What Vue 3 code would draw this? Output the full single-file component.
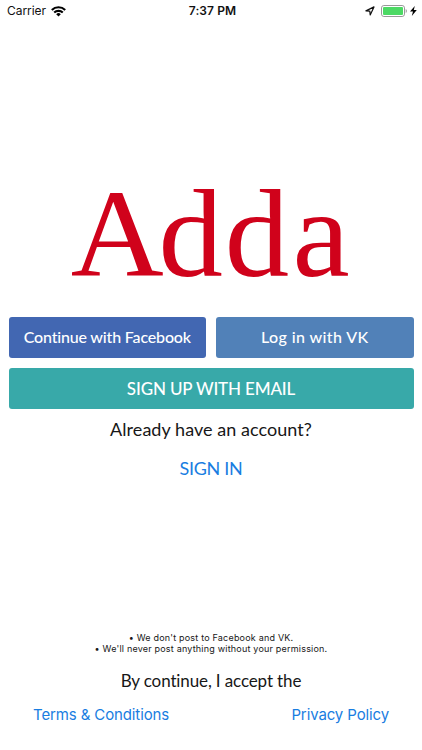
<script setup>
const notes = ["We don't post to Facebook and VK.", "We'll never post anything without your permission."]
</script>

<template>
  <main class="screen">
    <header class="status">
      <div class="side">
        <span class="carrier">Carrier</span>
        <svg class="wifi" width="15" height="11" viewBox="0 0 15 11" aria-hidden="true">
          <g fill="none" stroke="#000" stroke-width="2.1">
            <path d="M.8 4A9.6 9.6 0 0 1 14.2 4" />
            <path d="M3.2 6.6A6.1 6.1 0 0 1 11.8 6.6" />
          </g>
          <path d="M5.2 8.2A3.3 3.3 0 0 1 9.8 8.2L7.5 10.5Z" />
        </svg>
      </div>
      <span class="time">7:37 PM</span>
      <div class="side right">
        <svg class="location" width="10" height="10" viewBox="0 0 10 10" aria-hidden="true">
          <path d="M.9 4.9L9 .9L5.2 9L4.8 5.1Z" fill="none" stroke="#111" stroke-width="1.2" stroke-linejoin="round" />
        </svg>
        <svg width="26" height="12" viewBox="0 0 26 12" aria-hidden="true">
          <rect x=".5" y=".5" width="23" height="11" rx="2.4" fill="#fff" stroke="#999" />
          <rect x="2" y="2" width="20" height="8" rx="1" fill="#4cd964" />
          <path d="M24.7 4v4q1.2-.7 1.2-2t-1.2-2" fill="#999" />
        </svg>
        <svg class="bolt" width="7" height="10" viewBox="0 0 7 10" aria-hidden="true">
          <path d="M4.8 0L0 5.6H3L1.8 10L6.8 4.1H3.8Z" />
        </svg>
      </div>
    </header>

    <h1 class="logo">
      <svg width="422" height="180" viewBox="0 0 422 180">
        <text transform="scale(1.03 1)" x="68.8 153.8 218.3 284" y="141">Adda</text>
      </svg>
    </h1>

    <section class="actions">
      <button class="btn facebook">Continue with Facebook</button>
      <button class="btn vk">Log in with VK</button>
      <button class="btn email">SIGN UP WITH EMAIL</button>
    </section>

    <p class="account">Already have an account?</p>
    <a class="signin">SIGN IN</a>

    <footer class="footer">
      <p v-for="note in notes" :key="note" class="note">• {{ note }}</p>
      <p class="accept">By continue, I accept the</p>
      <nav class="links">
        <a class="terms">Terms &amp; Conditions</a>
        <a class="privacy">Privacy Policy</a>
      </nav>
    </footer>
  </main>
</template>

<style>
body { background: #fff; }
</style>

<style scoped>
.screen {
  display: flex;
  flex-direction: column;
  align-items: center;
  box-sizing: border-box;
  width: 422px;
  height: 750px;
  overflow: hidden;
  background: #fff;
  color: #171717;
  font-family: Lato, sans-serif;
  font-variant-ligatures: none;
}
p, h1 { margin: 0; font-weight: 400; }
.status {
  display: grid;
  grid-template-columns: 1fr auto 1fr;
  align-items: center;
  box-sizing: border-box;
  width: 100%;
  height: 22px;
  padding: 0 5px 0 7px;
  font: 12px/22px Inter, sans-serif;
  color: #111;
}
.side { display: flex; align-items: center; }
.right { justify-content: flex-end; }
.carrier { letter-spacing: -.05px; }
.wifi { margin-left: 5px; }
.time { padding-left: 1px; font-weight: 600; letter-spacing: .1px; }
.location { margin-right: 6px; }
.bolt { margin-left: 3px; }
.logo { height: 295px; padding-top: 113px; box-sizing: border-box; }
.logo svg { display: block; }
.logo text { font: 125px "Liberation Serif", serif; fill: #d0021b; }
.actions {
  display: grid;
  grid-template-columns: 1fr 1fr;
  gap: 10px;
  box-sizing: border-box;
  width: 100%;
  padding: 0 8.5px;
}
.btn {
  height: 41px;
  padding: 0 0 1px;
  border: 0;
  border-radius: 3px;
  color: #fff;
  font: 500 16px/40px Lato, sans-serif;
  white-space: nowrap;
}
.facebook { background: #4267b2; letter-spacing: -.17px; }
.vk { background: #5181b8; letter-spacing: .4px; }
.email { grid-column: 1 / -1; padding: 1px 0 0; background: #38a9a9; font-size: 17px; letter-spacing: -.15px; }
.account { margin-top: 8px; font-size: 18px; line-height: 24px; letter-spacing: .05px; }
.signin { margin-top: 15px; font-size: 18px; line-height: 24px; letter-spacing: -.3px; color: #197de1; }
.footer {
  display: flex;
  flex-direction: column;
  align-items: center;
  width: 100%;
  margin-top: auto;
  padding-bottom: 25px;
}
.note { font: 9px/11px Inter, sans-serif; letter-spacing: .2px; }
.accept { margin-top: 15px; font-size: 17px; line-height: 24px; letter-spacing: -.12px; }
.links {
  display: flex;
  justify-content: space-between;
  box-sizing: border-box;
  width: 100%;
  margin-top: 12px;
  padding: 0 33px;
  font: 15px/20px Inter, sans-serif;
  letter-spacing: -.12px;
  color: #197de1;
}
</style>
